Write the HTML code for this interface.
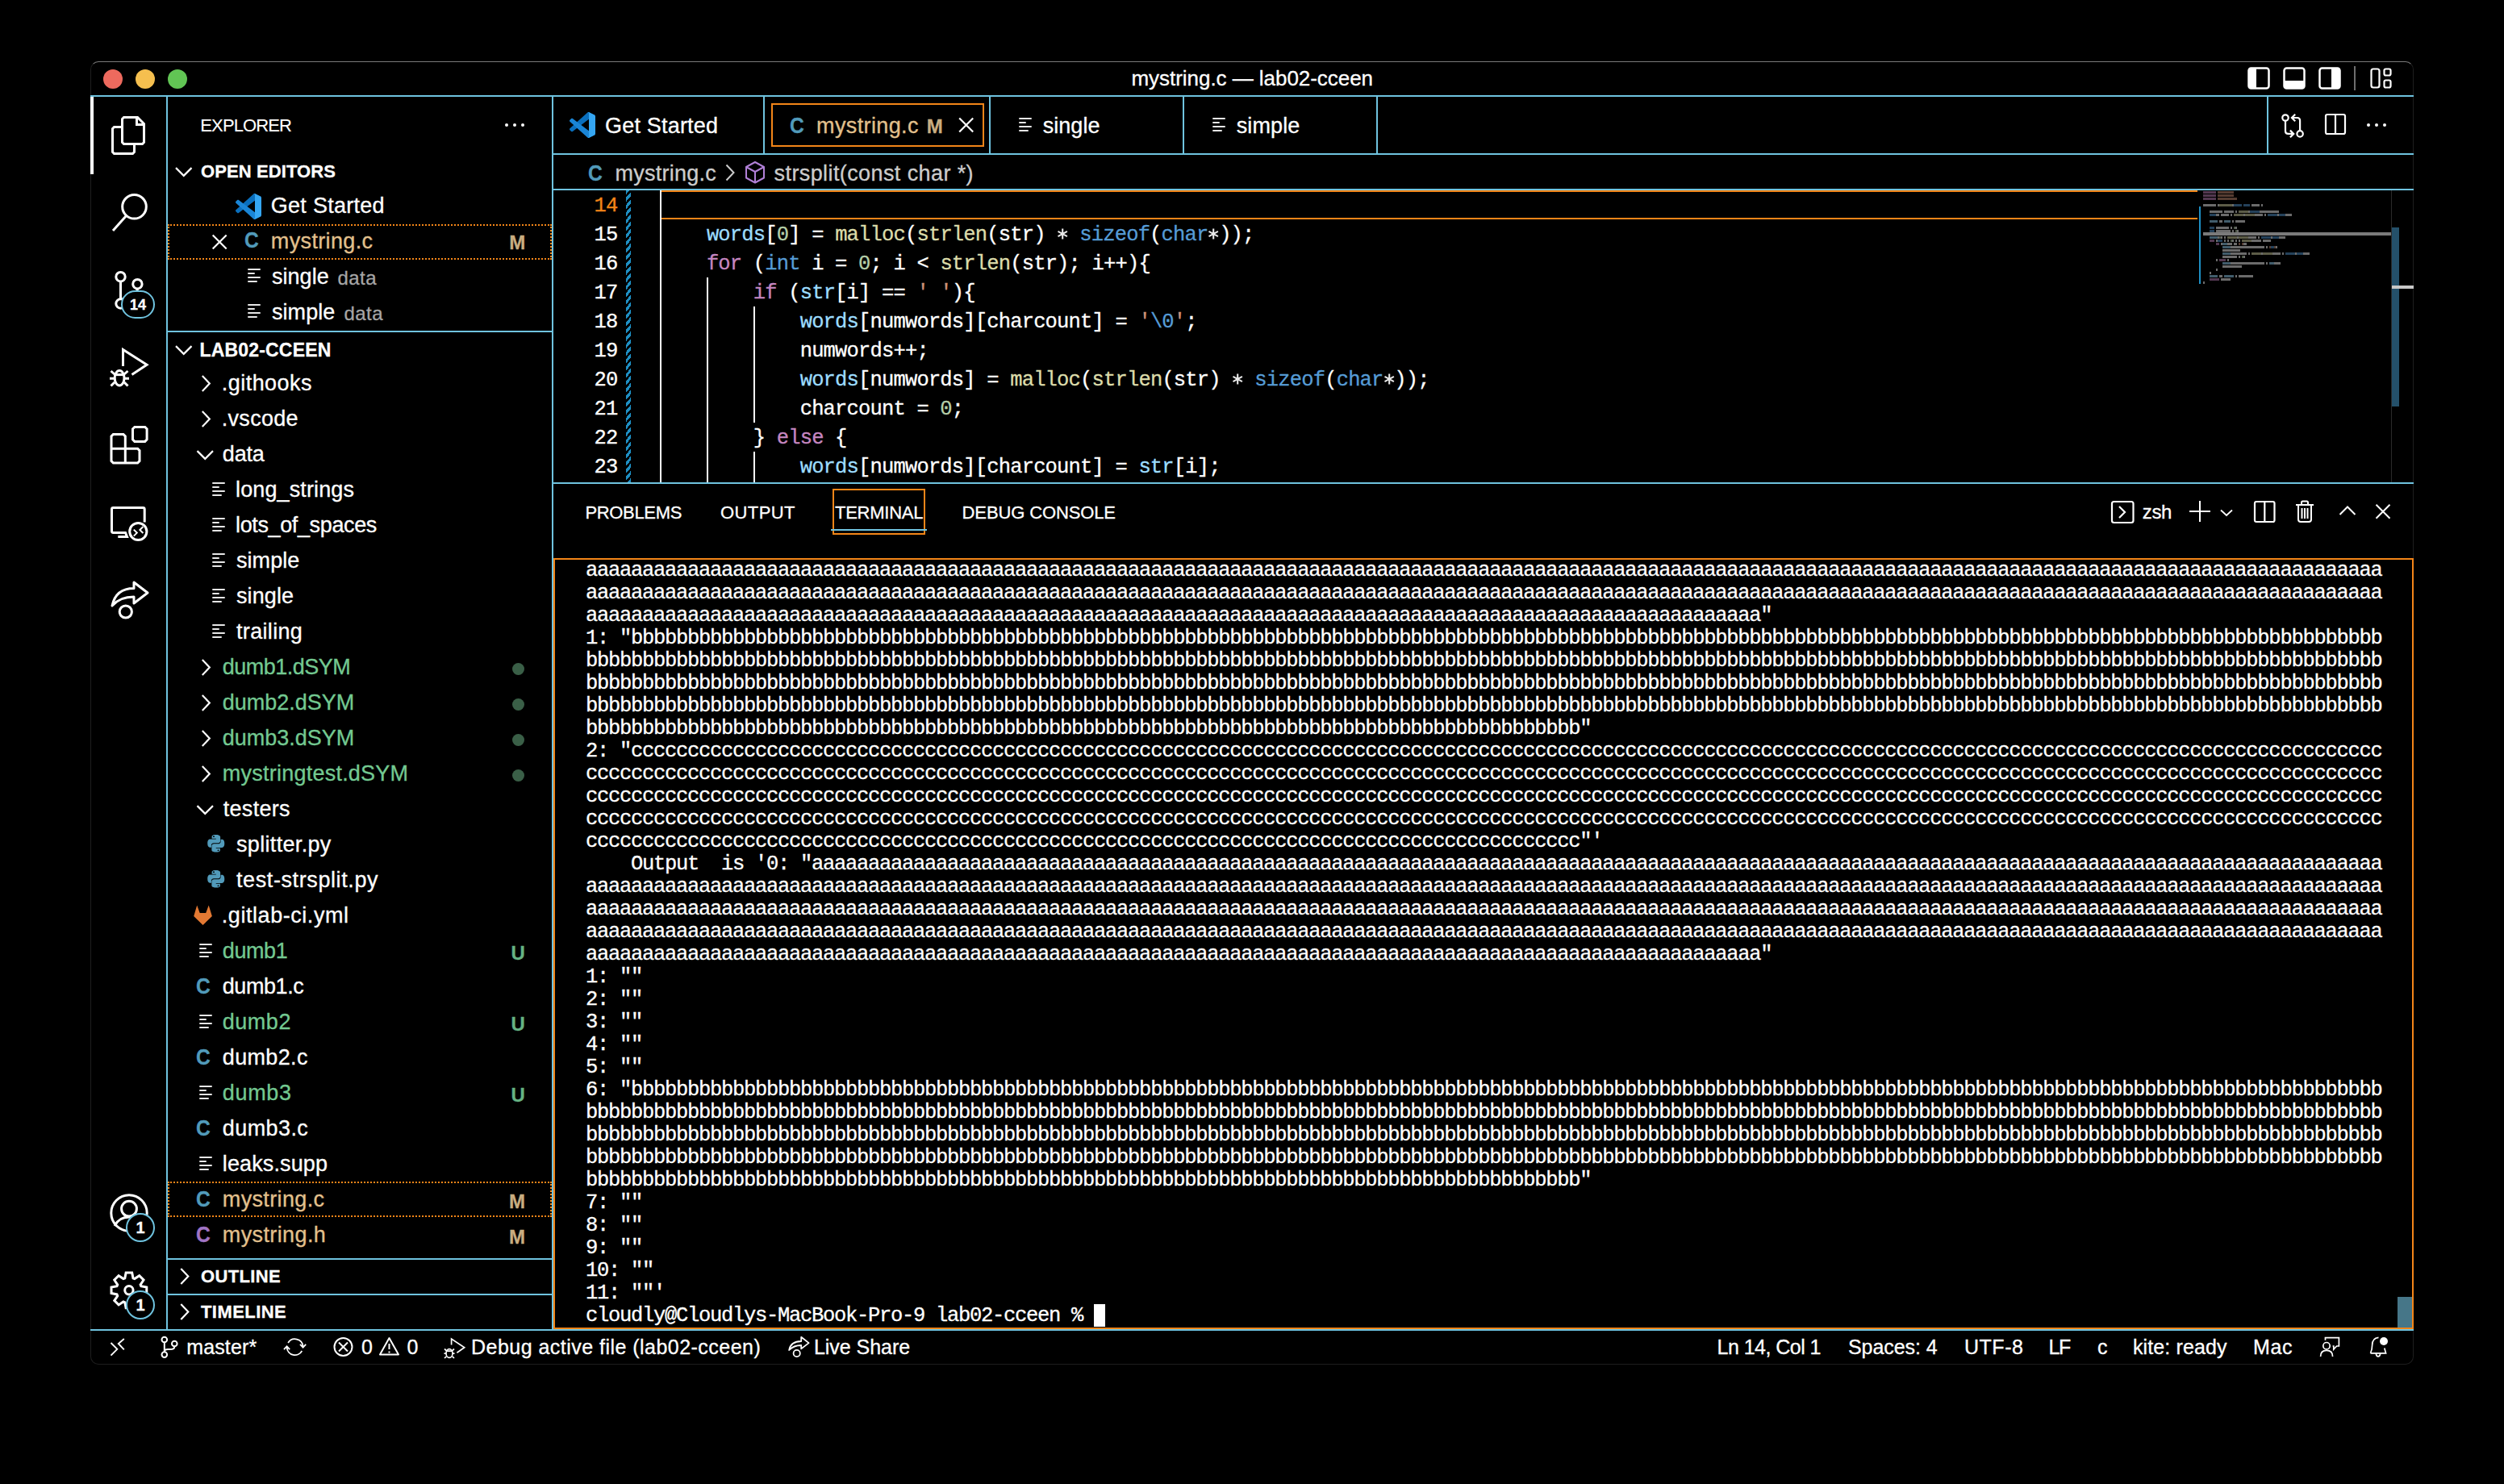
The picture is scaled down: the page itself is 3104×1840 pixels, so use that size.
<!DOCTYPE html>
<html><head><meta charset="utf-8">
<style>
html,body{margin:0;padding:0;background:#000;width:3104px;height:1840px;overflow:hidden}
body{position:relative;font-family:'Liberation Sans',sans-serif;color:#fff}
.a{position:absolute}
.t{position:absolute;white-space:pre;line-height:1;-webkit-text-stroke:0.3px currentColor}
svg{position:absolute;overflow:visible}
</style></head><body>

<div class="a" style="left:112px;top:76px;width:2878px;height:1614px;border:1px solid #1e1e1e;border-top-color:#7a7a7a;border-radius:10px"></div>
<div class="a" style="left:128px;top:86px;width:24px;height:24px;border-radius:50%;background:#ed6a5e"></div>
<div class="a" style="left:168px;top:86px;width:24px;height:24px;border-radius:50%;background:#f5bf4f"></div>
<div class="a" style="left:208px;top:86px;width:24px;height:24px;border-radius:50%;background:#61c554"></div>
<div class="t" style="left:1402.50px;top:83.79px;font-size:26px;color:#fff;letter-spacing:-0.044px;">mystring.c — lab02-cceen</div>
<svg width="3104" height="1840" style="left:0;top:0" fill="none" stroke="#fff" stroke-width="2.5" ><rect x="2787.5" y="84.5" width="25" height="25" rx="3"/></svg>
<div class="a" style="left:2787px;top:84px;width:10px;height:26px;background:#fff;border-radius:3px 0 0 3px"></div>
<svg width="3104" height="1840" style="left:0;top:0" fill="none" stroke="#fff" stroke-width="2.5" ><rect x="2831.5" y="84.5" width="25" height="25" rx="3"/></svg>
<div class="a" style="left:2831px;top:100px;width:26px;height:10px;background:#fff;border-radius:0 0 3px 3px"></div>
<svg width="3104" height="1840" style="left:0;top:0" fill="none" stroke="#fff" stroke-width="2.5" ><rect x="2875.5" y="84.5" width="25" height="25" rx="3"/></svg>
<div class="a" style="left:2890px;top:84px;width:11px;height:26px;background:#fff;border-radius:0 3px 3px 0"></div>
<div class="a" style="left:2918px;top:82px;width:2px;height:30px;background:#6e6e6e;"></div>
<svg width="3104" height="1840" style="left:0;top:0" fill="none" stroke="#fff" stroke-width="2.2" ><rect x="2939.5" y="85.5" width="10" height="23" rx="2.5"/><rect x="2955.5" y="85.5" width="8" height="8" rx="2"/><rect x="2955.5" y="99.5" width="8" height="9" rx="2"/></svg>
<div class="a" style="left:112px;top:118px;width:2880px;height:2px;background:#6fc3df;"></div>
<div class="a" style="left:206px;top:120px;width:2px;height:1528px;background:#6fc3df;"></div>
<div class="a" style="left:684px;top:120px;width:2px;height:1528px;background:#6fc3df;"></div>
<div class="a" style="left:112px;top:1648px;width:2880px;height:2px;background:#6fc3df;"></div>
<div class="a" style="left:112px;top:120px;width:4px;height:96px;background:#fff;"></div>
<svg width="3104" height="1840" style="left:0;top:0" fill="none" stroke="#fff" stroke-width="3" ><path d="M153.5,145.5 H170.5 L178.5,153.5 V176.5 L176.5,178.5 H153.5 L151.5,176.5 V147.5 Z"/><path d="M169.5,145.5 V154.5 H178.5"/><path d="M151.5,157.5 H141.5 L139.5,159.5 V188.5 L141.5,190.5 H164.5 L166.5,188.5 V178.5"/></svg>
<svg width="3104" height="1840" style="left:0;top:0" fill="none" stroke="#fff" stroke-width="3" ><circle cx="166.5" cy="256.3" r="14.8"/><path d="M156.5,267.5 L140,286"/></svg>
<svg width="3104" height="1840" style="left:0;top:0" fill="none" stroke="#fff" stroke-width="3" ><circle cx="149.5" cy="343.2" r="5.7"/><circle cx="170.4" cy="352.2" r="5.7"/><circle cx="149.5" cy="376.5" r="5.7"/><path d="M149.5,349 V370.5"/><path d="M170.4,358 C170.4,366 158,366 152,371"/></svg>
<div class="a" style="left:150px;top:360px;width:38px;height:31px;border:2px solid #6fc3df;border-radius:18px;background:#000"></div>
<div class="t" style="left:171.00px;transform:translateX(-50%);top:369.26px;font-size:18px;color:#fff;font-weight:bold;">14</div>
<svg width="3104" height="1840" style="left:0;top:0" fill="none" stroke="#fff" stroke-width="3" ><path d="M152.5,454 V433.5 L182,452.3 L163.5,464.5"/><ellipse cx="148.1" cy="468.8" rx="5.9" ry="9.2"/><path d="M141,464.6 H155"/><path d="M136,469.2 H141 M155,469.2 H160 M137.5,460 L142,464 M158.5,460 L154,464 M137.5,478.5 L142,474 M158.5,478.5 L154,474"/></svg>
<svg width="3104" height="1840" style="left:0;top:0" fill="none" stroke="#fff" stroke-width="3" stroke-linejoin="miter"><path d="M140.4,538.5 H152.9 L155.3,540.9 V556.3 H170.6 L173,558.7 V571.6 L170.6,574 H140.4 L138,571.6 V540.9 Z M138,556.3 H155.3 V574"/><path d="M166.9,529.4 H179.7 L182.1,531.8 V545 L179.7,547.4 H166.9 L164.5,545 V531.8 Z"/></svg>
<svg width="3104" height="1840" style="left:0;top:0" fill="none" stroke="#fff" stroke-width="3" ><path d="M179.2,647.5 V631.5 Q179.2,629.6 177.3,629.6 H140.4 Q138.5,629.6 138.5,631.5 V658.6 Q138.5,660.5 140.4,660.5 H155.5 L157.5,665.5 H146.3"/><circle cx="171.3" cy="659" r="10.6"/><path d="M165.8,656.6 L169.8,660.6 L165.8,664.6 M177.4,653 L173.4,657 L177.4,661" stroke-width="2"/></svg>
<svg width="3104" height="1840" style="left:0;top:0" fill="none" stroke="#fff" stroke-width="3" ><path d="M139,751 C142,737 150,729.5 166,729.5 V722 L183,735 L166,748 V740 C155,740 146,743 139,751 Z" stroke-linejoin="round"/><circle cx="155.8" cy="758.5" r="7.6"/></svg>
<svg width="3104" height="1840" style="left:0;top:0" fill="none" stroke="#fff" stroke-width="3" ><circle cx="160" cy="1504" r="22.2"/><circle cx="160" cy="1498.7" r="9.4"/><path d="M142,1520 C146,1512 152,1509 160,1509 C168,1509 174,1512 178,1520"/></svg>
<div class="a" style="left:156px;top:1504px;width:32px;height:32px;border:2px solid #6fc3df;border-radius:50%;background:#000"></div>
<div class="t" style="left:174.00px;transform:translateX(-50%);top:1511.57px;font-size:20px;color:#fff;font-weight:bold;">1</div>
<svg width="3104" height="1840" style="left:0;top:0" fill="none" stroke="#fff" stroke-width="3" ><polygon points="156.14,1577.92 163.66,1577.92 165.02,1584.85 166.85,1585.61 172.72,1581.67 178.03,1586.98 174.09,1592.85 174.85,1594.68 181.78,1596.04 181.78,1603.56 174.85,1604.92 174.09,1606.75 178.03,1612.62 172.72,1617.93 166.85,1613.99 165.02,1614.75 163.66,1621.68 156.14,1621.68 154.78,1614.75 152.95,1613.99 147.08,1617.93 141.77,1612.62 145.71,1606.75 144.95,1604.92 138.02,1603.56 138.02,1596.04 144.95,1594.68 145.71,1592.85 141.77,1586.98 147.08,1581.67 152.95,1585.61 154.78,1584.85" stroke-linejoin="miter"/><circle cx="159.9" cy="1599.8" r="5.2"/></svg>
<div class="a" style="left:156px;top:1600px;width:32px;height:32px;border:2px solid #6fc3df;border-radius:50%;background:#000"></div>
<div class="t" style="left:174.00px;transform:translateX(-50%);top:1607.57px;font-size:20px;color:#fff;font-weight:bold;">1</div>
<div class="t" style="left:248.30px;top:145.38px;font-size:22px;color:#fff;letter-spacing:-0.876px;-webkit-text-stroke:0.1px #fff">EXPLORER</div>
<div class="a" style="left:625.9px;top:152.9px;width:4.2px;height:4.2px;border-radius:50%;background:#fff"></div>
<div class="a" style="left:635.9px;top:152.9px;width:4.2px;height:4.2px;border-radius:50%;background:#fff"></div>
<div class="a" style="left:645.9px;top:152.9px;width:4.2px;height:4.2px;border-radius:50%;background:#fff"></div>
<svg width="3104" height="1840" style="left:0;top:0" fill="none" stroke="#fff" stroke-width="2.2" ><path d="M218.0,208.125 L227.75,217.875 L237.5,208.125"/></svg>
<div class="t" style="left:249.00px;top:202.38px;font-size:22px;color:#fff;font-weight:bold;letter-spacing:0.102px;">OPEN EDITORS</div>
<svg width="32" height="32" viewBox="0 0 100 100" style="left:292px;top:240px"><path fill="#0a6fbd" d="M96.46 10.8L75.86.87C73.48-.28 70.62.21 68.75 2.08L1.3 63.58c-1.81 1.65-1.81 4.51.01 6.16l5.51 5.01c1.49 1.35 3.72 1.45 5.32.24L93.4 13.47c2.72-2.06 6.62-.12 6.62 3.29v-.24c0-2.4-1.38-4.59-3.54-5.63z"/><path fill="#1a85d6" d="M96.46 89.2L75.86 99.13c-2.38 1.15-5.24.66-7.11-1.21L1.3 36.42c-1.81-1.65-1.81-4.51.01-6.16l5.51-5.01c1.49-1.35 3.72-1.45 5.32-.24L93.4 86.53c2.72 2.06 6.62.12 6.62-3.29v.24c0 2.4-1.38 4.59-3.54 5.63z"/><path fill="#35a6f2" d="M75.86 99.13c-2.38 1.15-5.24.66-7.11-1.21 2.31 2.31 6.25.67 6.25-2.59V4.67c0-3.26-3.94-4.9-6.25-2.59 1.87-1.87 4.73-2.36 7.11-1.21L96.46 10.8c2.17 1.04 3.54 3.23 3.54 5.63v67.14c0 2.4-1.38 4.59-3.54 5.63L75.86 99.13z"/></svg>
<div class="t" style="left:335.80px;top:242.04px;font-size:27px;color:#fff;letter-spacing:0.274px;">Get Started</div>
<div class="a" style="left:208px;top:278px;width:476px;height:44px;box-sizing:border-box;border:2px dotted #f38518"></div>
<svg width="3104" height="1840" style="left:0;top:0" fill="none" stroke="#fff" stroke-width="2.2" ><path d="M263.7,291.5 L280.7,308.5 M280.7,291.5 L263.7,308.5"/></svg>
<div class="t" style="left:302.90px;top:284.30px;font-size:28px;color:#519aba;font-weight:bold;transform:scaleX(0.88);transform-origin:0 0;">C</div>
<div class="t" style="left:335.80px;top:286.04px;font-size:27px;color:#e2c08d;letter-spacing:0.365px;">mystring.c</div>
<div class="t" style="left:631.30px;top:288.58px;font-size:24px;color:#c9ad80;font-weight:bold;">M</div>
<div class="a" style="left:307px;top:333px;width:16px;height:2px;background:#e6e6e6;border-radius:1px"></div>
<div class="a" style="left:307px;top:338px;width:9px;height:2px;background:#e6e6e6;border-radius:1px"></div>
<div class="a" style="left:307px;top:343px;width:16px;height:2px;background:#e6e6e6;border-radius:1px"></div>
<div class="a" style="left:307px;top:348px;width:12px;height:2px;background:#e6e6e6;border-radius:1px"></div>
<div class="t" style="left:337.00px;top:330.04px;font-size:27px;color:#fff;letter-spacing:0.034px;">single</div>
<div class="t" style="left:418.60px;top:332.58px;font-size:24px;color:#a6a6a6;letter-spacing:0.412px;">data</div>
<div class="a" style="left:307px;top:377px;width:16px;height:2px;background:#e6e6e6;border-radius:1px"></div>
<div class="a" style="left:307px;top:382px;width:9px;height:2px;background:#e6e6e6;border-radius:1px"></div>
<div class="a" style="left:307px;top:387px;width:16px;height:2px;background:#e6e6e6;border-radius:1px"></div>
<div class="a" style="left:307px;top:392px;width:12px;height:2px;background:#e6e6e6;border-radius:1px"></div>
<div class="t" style="left:337.00px;top:374.04px;font-size:27px;color:#fff;letter-spacing:0.059px;">simple</div>
<div class="t" style="left:426.60px;top:376.58px;font-size:24px;color:#a6a6a6;letter-spacing:0.412px;">data</div>
<div class="a" style="left:208px;top:410px;width:476px;height:2px;background:#6fc3df;"></div>
<svg width="3104" height="1840" style="left:0;top:0" fill="none" stroke="#fff" stroke-width="2.2" ><path d="M218.0,429.125 L227.75,438.875 L237.5,429.125"/></svg>
<div class="t" style="left:247.50px;top:422.53px;font-size:23px;color:#fff;font-weight:bold;letter-spacing:0.179px;">LAB02-CCEEN</div>
<svg width="3104" height="1840" style="left:0;top:0" fill="none" stroke="#fff" stroke-width="2.2" ><path d="M250.8,466.0 L259.8,475.5 L250.8,485.0"/></svg>
<div class="t" style="left:274.80px;top:462.14px;font-size:27px;color:#fff;letter-spacing:0.454px;">.githooks</div>
<svg width="3104" height="1840" style="left:0;top:0" fill="none" stroke="#fff" stroke-width="2.2" ><path d="M250.8,510.0 L259.8,519.5 L250.8,529.0"/></svg>
<div class="t" style="left:274.80px;top:506.14px;font-size:27px;color:#fff;letter-spacing:0.278px;">.vscode</div>
<svg width="3104" height="1840" style="left:0;top:0" fill="none" stroke="#fff" stroke-width="2.2" ><path d="M244.5,559.125 L254.25,568.875 L264.0,559.125"/></svg>
<div class="t" style="left:275.80px;top:550.14px;font-size:27px;color:#fff;letter-spacing:-0.178px;">data</div>
<div class="a" style="left:263px;top:598px;width:16px;height:2px;background:#e6e6e6;border-radius:1px"></div>
<div class="a" style="left:263px;top:603px;width:9px;height:2px;background:#e6e6e6;border-radius:1px"></div>
<div class="a" style="left:263px;top:608px;width:16px;height:2px;background:#e6e6e6;border-radius:1px"></div>
<div class="a" style="left:263px;top:613px;width:12px;height:2px;background:#e6e6e6;border-radius:1px"></div>
<div class="t" style="left:292.00px;top:594.14px;font-size:27px;color:#fff;letter-spacing:0.129px;">long_strings</div>
<div class="a" style="left:263px;top:642px;width:16px;height:2px;background:#e6e6e6;border-radius:1px"></div>
<div class="a" style="left:263px;top:647px;width:9px;height:2px;background:#e6e6e6;border-radius:1px"></div>
<div class="a" style="left:263px;top:652px;width:16px;height:2px;background:#e6e6e6;border-radius:1px"></div>
<div class="a" style="left:263px;top:657px;width:12px;height:2px;background:#e6e6e6;border-radius:1px"></div>
<div class="t" style="left:292.00px;top:638.14px;font-size:27px;color:#fff;letter-spacing:-0.37px;">lots_of_spaces</div>
<div class="a" style="left:263px;top:686px;width:16px;height:2px;background:#e6e6e6;border-radius:1px"></div>
<div class="a" style="left:263px;top:691px;width:9px;height:2px;background:#e6e6e6;border-radius:1px"></div>
<div class="a" style="left:263px;top:696px;width:16px;height:2px;background:#e6e6e6;border-radius:1px"></div>
<div class="a" style="left:263px;top:701px;width:12px;height:2px;background:#e6e6e6;border-radius:1px"></div>
<div class="t" style="left:293.00px;top:682.14px;font-size:27px;color:#fff;letter-spacing:0.059px;">simple</div>
<div class="a" style="left:263px;top:730px;width:16px;height:2px;background:#e6e6e6;border-radius:1px"></div>
<div class="a" style="left:263px;top:735px;width:9px;height:2px;background:#e6e6e6;border-radius:1px"></div>
<div class="a" style="left:263px;top:740px;width:16px;height:2px;background:#e6e6e6;border-radius:1px"></div>
<div class="a" style="left:263px;top:745px;width:12px;height:2px;background:#e6e6e6;border-radius:1px"></div>
<div class="t" style="left:293.00px;top:726.14px;font-size:27px;color:#fff;letter-spacing:0.094px;">single</div>
<div class="a" style="left:263px;top:774px;width:16px;height:2px;background:#e6e6e6;border-radius:1px"></div>
<div class="a" style="left:263px;top:779px;width:9px;height:2px;background:#e6e6e6;border-radius:1px"></div>
<div class="a" style="left:263px;top:784px;width:16px;height:2px;background:#e6e6e6;border-radius:1px"></div>
<div class="a" style="left:263px;top:789px;width:12px;height:2px;background:#e6e6e6;border-radius:1px"></div>
<div class="t" style="left:293.00px;top:770.14px;font-size:27px;color:#fff;letter-spacing:0.326px;">trailing</div>
<svg width="3104" height="1840" style="left:0;top:0" fill="none" stroke="#fff" stroke-width="2.2" ><path d="M250.8,818.0 L259.8,827.5 L250.8,837.0"/></svg>
<div class="t" style="left:275.80px;top:814.14px;font-size:27px;color:#73c991;letter-spacing:-0.521px;">dumb1.dSYM</div>
<div class="a" style="left:634.5px;top:821.5px;width:15px;height:15px;border-radius:50%;background:#3a5f47"></div>
<svg width="3104" height="1840" style="left:0;top:0" fill="none" stroke="#fff" stroke-width="2.2" ><path d="M250.8,862.0 L259.8,871.5 L250.8,881.0"/></svg>
<div class="t" style="left:275.80px;top:858.14px;font-size:27px;color:#73c991;letter-spacing:-0.021px;">dumb2.dSYM</div>
<div class="a" style="left:634.5px;top:865.5px;width:15px;height:15px;border-radius:50%;background:#3a5f47"></div>
<svg width="3104" height="1840" style="left:0;top:0" fill="none" stroke="#fff" stroke-width="2.2" ><path d="M250.8,906.0 L259.8,915.5 L250.8,925.0"/></svg>
<div class="t" style="left:275.80px;top:902.14px;font-size:27px;color:#73c991;letter-spacing:-0.021px;">dumb3.dSYM</div>
<div class="a" style="left:634.5px;top:909.5px;width:15px;height:15px;border-radius:50%;background:#3a5f47"></div>
<svg width="3104" height="1840" style="left:0;top:0" fill="none" stroke="#fff" stroke-width="2.2" ><path d="M250.8,950.0 L259.8,959.5 L250.8,969.0"/></svg>
<div class="t" style="left:275.80px;top:946.14px;font-size:27px;color:#73c991;letter-spacing:0.233px;">mystringtest.dSYM</div>
<div class="a" style="left:634.5px;top:953.5px;width:15px;height:15px;border-radius:50%;background:#3a5f47"></div>
<svg width="3104" height="1840" style="left:0;top:0" fill="none" stroke="#fff" stroke-width="2.2" ><path d="M244.5,999.125 L254.25,1008.875 L264.0,999.125"/></svg>
<div class="t" style="left:276.80px;top:990.14px;font-size:27px;color:#fff;letter-spacing:0.279px;">testers</div>
<svg width="21.5" height="21.5" viewBox="0 0 100 100" style="left:256.8px;top:1035px"><g fill="#519aba"><path d="M49,0C24,0 26,11 26,11V22H50V26H17C17,26 1,24 1,49C1,74 15,73 15,73H23V62C23,62 22,48 37,48H61C61,48 75,48 75,35V13C75,13 77,0 49,0Z"/><path d="M51,100C76,100 74,89 74,89V78H50V74H83C83,74 99,76 99,51C99,26 85,27 85,27H77V38C77,38 78,52 63,52H39C39,52 25,52 25,65V87C25,87 23,100 51,100Z"/></g><circle cx="37" cy="10" r="4.5" fill="#000"/><circle cx="63" cy="90" r="4.5" fill="#000"/></svg>
<div class="t" style="left:293.00px;top:1034.14px;font-size:27px;color:#fff;letter-spacing:0.325px;">splitter.py</div>
<svg width="21.5" height="21.5" viewBox="0 0 100 100" style="left:256.8px;top:1079px"><g fill="#519aba"><path d="M49,0C24,0 26,11 26,11V22H50V26H17C17,26 1,24 1,49C1,74 15,73 15,73H23V62C23,62 22,48 37,48H61C61,48 75,48 75,35V13C75,13 77,0 49,0Z"/><path d="M51,100C76,100 74,89 74,89V78H50V74H83C83,74 99,76 99,51C99,26 85,27 85,27H77V38C77,38 78,52 63,52H39C39,52 25,52 25,65V87C25,87 23,100 51,100Z"/></g><circle cx="37" cy="10" r="4.5" fill="#000"/><circle cx="63" cy="90" r="4.5" fill="#000"/></svg>
<div class="t" style="left:293.00px;top:1078.14px;font-size:27px;color:#fff;letter-spacing:0.598px;">test-strsplit.py</div>
<svg width="3104" height="1840" style="left:0;top:0"><path fill="#e37933" d="M244.2,1122.5 L247.7,1132.0 H255.2 L258.7,1122.5 L262.9,1136.0 L251.5,1147.0 L240.2,1136.0 Z"/></svg>
<div class="t" style="left:274.80px;top:1122.14px;font-size:27px;color:#fff;letter-spacing:0.551px;">.gitlab-ci.yml</div>
<div class="a" style="left:247px;top:1170px;width:16px;height:2px;background:#e6e6e6;border-radius:1px"></div>
<div class="a" style="left:247px;top:1175px;width:9px;height:2px;background:#e6e6e6;border-radius:1px"></div>
<div class="a" style="left:247px;top:1180px;width:16px;height:2px;background:#e6e6e6;border-radius:1px"></div>
<div class="a" style="left:247px;top:1185px;width:12px;height:2px;background:#e6e6e6;border-radius:1px"></div>
<div class="t" style="left:275.80px;top:1166.14px;font-size:27px;color:#73c991;letter-spacing:-0.41px;">dumb1</div>
<div class="t" style="left:633.60px;top:1169.68px;font-size:24px;color:#66b283;font-weight:bold;">U</div>
<div class="t" style="left:242.80px;top:1208.70px;font-size:28px;color:#519aba;font-weight:bold;transform:scaleX(0.88);transform-origin:0 0;">C</div>
<div class="t" style="left:275.80px;top:1210.14px;font-size:27px;color:#fff;letter-spacing:-0.443px;">dumb1.c</div>
<div class="a" style="left:247px;top:1258px;width:16px;height:2px;background:#e6e6e6;border-radius:1px"></div>
<div class="a" style="left:247px;top:1263px;width:9px;height:2px;background:#e6e6e6;border-radius:1px"></div>
<div class="a" style="left:247px;top:1268px;width:16px;height:2px;background:#e6e6e6;border-radius:1px"></div>
<div class="a" style="left:247px;top:1273px;width:12px;height:2px;background:#e6e6e6;border-radius:1px"></div>
<div class="t" style="left:275.80px;top:1254.14px;font-size:27px;color:#73c991;letter-spacing:0.515px;">dumb2</div>
<div class="t" style="left:633.60px;top:1257.68px;font-size:24px;color:#66b283;font-weight:bold;">U</div>
<div class="t" style="left:242.80px;top:1296.70px;font-size:28px;color:#519aba;font-weight:bold;transform:scaleX(0.88);transform-origin:0 0;">C</div>
<div class="t" style="left:275.80px;top:1298.14px;font-size:27px;color:#fff;letter-spacing:0.34px;">dumb2.c</div>
<div class="a" style="left:247px;top:1346px;width:16px;height:2px;background:#e6e6e6;border-radius:1px"></div>
<div class="a" style="left:247px;top:1351px;width:9px;height:2px;background:#e6e6e6;border-radius:1px"></div>
<div class="a" style="left:247px;top:1356px;width:16px;height:2px;background:#e6e6e6;border-radius:1px"></div>
<div class="a" style="left:247px;top:1361px;width:12px;height:2px;background:#e6e6e6;border-radius:1px"></div>
<div class="t" style="left:275.80px;top:1342.14px;font-size:27px;color:#73c991;letter-spacing:0.665px;">dumb3</div>
<div class="t" style="left:633.60px;top:1345.68px;font-size:24px;color:#66b283;font-weight:bold;">U</div>
<div class="t" style="left:242.80px;top:1384.70px;font-size:28px;color:#519aba;font-weight:bold;transform:scaleX(0.88);transform-origin:0 0;">C</div>
<div class="t" style="left:275.80px;top:1386.14px;font-size:27px;color:#fff;letter-spacing:0.407px;">dumb3.c</div>
<div class="a" style="left:247px;top:1434px;width:16px;height:2px;background:#e6e6e6;border-radius:1px"></div>
<div class="a" style="left:247px;top:1439px;width:9px;height:2px;background:#e6e6e6;border-radius:1px"></div>
<div class="a" style="left:247px;top:1444px;width:16px;height:2px;background:#e6e6e6;border-radius:1px"></div>
<div class="a" style="left:247px;top:1449px;width:12px;height:2px;background:#e6e6e6;border-radius:1px"></div>
<div class="t" style="left:275.80px;top:1430.14px;font-size:27px;color:#fff;letter-spacing:0.115px;">leaks.supp</div>
<div class="t" style="left:242.80px;top:1472.70px;font-size:28px;color:#519aba;font-weight:bold;transform:scaleX(0.88);transform-origin:0 0;">C</div>
<div class="t" style="left:275.80px;top:1474.14px;font-size:27px;color:#e2c08d;letter-spacing:0.354px;">mystring.c</div>
<div class="t" style="left:631.00px;top:1477.68px;font-size:24px;color:#c9ad80;font-weight:bold;">M</div>
<div class="a" style="left:208px;top:1465px;width:476px;height:44px;box-sizing:border-box;border:2px dotted #f38518"></div>
<div class="t" style="left:242.80px;top:1516.70px;font-size:28px;color:#a074c4;font-weight:bold;transform:scaleX(0.88);transform-origin:0 0;">C</div>
<div class="t" style="left:275.80px;top:1518.14px;font-size:27px;color:#e2c08d;letter-spacing:0.387px;">mystring.h</div>
<div class="t" style="left:631.00px;top:1521.68px;font-size:24px;color:#c9ad80;font-weight:bold;">M</div>
<div class="a" style="left:208px;top:1560px;width:476px;height:2px;background:#6fc3df;"></div>
<svg width="3104" height="1840" style="left:0;top:0" fill="none" stroke="#fff" stroke-width="2.2" ><path d="M224.3,1573.0 L233.3,1582.5 L224.3,1592.0"/></svg>
<div class="t" style="left:249.00px;top:1572.38px;font-size:22px;color:#fff;font-weight:bold;letter-spacing:0.354px;">OUTLINE</div>
<div class="a" style="left:208px;top:1604px;width:476px;height:2px;background:#6fc3df;"></div>
<svg width="3104" height="1840" style="left:0;top:0" fill="none" stroke="#fff" stroke-width="2.2" ><path d="M224.3,1617.0 L233.3,1626.5 L224.3,1636.0"/></svg>
<div class="t" style="left:249.00px;top:1616.38px;font-size:22px;color:#fff;font-weight:bold;letter-spacing:0.43px;">TIMELINE</div>
<div class="a" style="left:946px;top:120px;width:2px;height:70px;background:#6fc3df;"></div>
<div class="a" style="left:1226px;top:120px;width:2px;height:70px;background:#6fc3df;"></div>
<div class="a" style="left:1466px;top:120px;width:2px;height:70px;background:#6fc3df;"></div>
<div class="a" style="left:1706px;top:120px;width:2px;height:70px;background:#6fc3df;"></div>
<div class="a" style="left:2810px;top:120px;width:2px;height:70px;background:#6fc3df;"></div>
<div class="a" style="left:686px;top:190px;width:2306px;height:2px;background:#6fc3df;"></div>
<svg width="32" height="32" viewBox="0 0 100 100" style="left:705.7px;top:139px"><path fill="#0a6fbd" d="M96.46 10.8L75.86.87C73.48-.28 70.62.21 68.75 2.08L1.3 63.58c-1.81 1.65-1.81 4.51.01 6.16l5.51 5.01c1.49 1.35 3.72 1.45 5.32.24L93.4 13.47c2.72-2.06 6.62-.12 6.62 3.29v-.24c0-2.4-1.38-4.59-3.54-5.63z"/><path fill="#1a85d6" d="M96.46 89.2L75.86 99.13c-2.38 1.15-5.24.66-7.11-1.21L1.3 36.42c-1.81-1.65-1.81-4.51.01-6.16l5.51-5.01c1.49-1.35 3.72-1.45 5.32-.24L93.4 86.53c2.72 2.06 6.62.12 6.62-3.29v.24c0 2.4-1.38 4.59-3.54 5.63z"/><path fill="#35a6f2" d="M75.86 99.13c-2.38 1.15-5.24.66-7.11-1.21 2.31 2.31 6.25.67 6.25-2.59V4.67c0-3.26-3.94-4.9-6.25-2.59 1.87-1.87 4.73-2.36 7.11-1.21L96.46 10.8c2.17 1.04 3.54 3.23 3.54 5.63v67.14c0 2.4-1.38 4.59-3.54 5.63L75.86 99.13z"/></svg>
<div class="t" style="left:750.00px;top:142.94px;font-size:27px;color:#fff;letter-spacing:0.194px;">Get Started</div>
<div class="a" style="left:956px;top:128px;width:264px;height:54px;box-sizing:border-box;border:2px solid #f38518"></div>
<div class="t" style="left:978.70px;top:141.60px;font-size:28px;color:#519aba;font-weight:bold;transform:scaleX(0.88);transform-origin:0 0;">C</div>
<div class="t" style="left:1012.00px;top:142.94px;font-size:27px;color:#e2c08d;letter-spacing:0.387px;">mystring.c</div>
<div class="t" style="left:1148.70px;top:145.18px;font-size:24px;color:#c9ad80;font-weight:bold;">M</div>
<svg width="3104" height="1840" style="left:0;top:0" fill="none" stroke="#fff" stroke-width="2.2" ><path d="M1189.2,146.5 L1206.2,163.5 M1206.2,146.5 L1189.2,163.5"/></svg>
<div class="a" style="left:1263px;top:146px;width:16px;height:2px;background:#e6e6e6;border-radius:1px"></div>
<div class="a" style="left:1263px;top:151px;width:9px;height:2px;background:#e6e6e6;border-radius:1px"></div>
<div class="a" style="left:1263px;top:156px;width:16px;height:2px;background:#e6e6e6;border-radius:1px"></div>
<div class="a" style="left:1263px;top:161px;width:12px;height:2px;background:#e6e6e6;border-radius:1px"></div>
<div class="t" style="left:1292.70px;top:142.94px;font-size:27px;color:#fff;letter-spacing:0.054px;">single</div>
<div class="a" style="left:1503px;top:146px;width:16px;height:2px;background:#e6e6e6;border-radius:1px"></div>
<div class="a" style="left:1503px;top:151px;width:9px;height:2px;background:#e6e6e6;border-radius:1px"></div>
<div class="a" style="left:1503px;top:156px;width:16px;height:2px;background:#e6e6e6;border-radius:1px"></div>
<div class="a" style="left:1503px;top:161px;width:12px;height:2px;background:#e6e6e6;border-radius:1px"></div>
<div class="t" style="left:1532.70px;top:142.94px;font-size:27px;color:#fff;letter-spacing:0.119px;">simple</div>
<svg width="3104" height="1840" style="left:0;top:0" fill="none" stroke="#fff" stroke-width="2.2" ><circle cx="2833" cy="146" r="3.7"/><circle cx="2851.1" cy="165.9" r="3.7"/><path d="M2833,149.8 V162.5 Q2833,165.9 2836.5,165.9 H2843.2 M2838.9,161.6 L2843.2,165.9 L2838.9,170.2 M2851.1,162.1 V149.5 Q2851.1,146 2847.6,146 H2840.9 M2845.2,141.7 L2840.9,146 L2845.2,150.3"/></svg>
<svg width="3104" height="1840" style="left:0;top:0" fill="none" stroke="#fff" stroke-width="2.2" ><rect x="2883" y="142" width="24" height="24" rx="2"/><path d="M2895,142 V166"/></svg>
<div class="a" style="left:2933.9px;top:152.9px;width:4.2px;height:4.2px;border-radius:50%;background:#fff"></div>
<div class="a" style="left:2943.9px;top:152.9px;width:4.2px;height:4.2px;border-radius:50%;background:#fff"></div>
<div class="a" style="left:2953.9px;top:152.9px;width:4.2px;height:4.2px;border-radius:50%;background:#fff"></div>
<div class="t" style="left:728.60px;top:200.80px;font-size:28px;color:#519aba;font-weight:bold;transform:scaleX(0.88);transform-origin:0 0;">C</div>
<div class="t" style="left:762.60px;top:202.14px;font-size:27px;color:#cccccc;letter-spacing:0.243px;">mystring.c</div>
<svg width="3104" height="1840" style="left:0;top:0" fill="none" stroke="#cccccc" stroke-width="2" ><path d="M900.5,204.5 L909.5,214 L900.5,223.5"/></svg>
<svg width="3104" height="1840" style="left:0;top:0" fill="none" stroke="#b180d7" stroke-width="2" stroke-linejoin="round"><path d="M936,201 L947,207 V220.5 L936,226.5 L925,220.5 V207 Z M925,207 L936,213 L947,207 M936,213 V226.5"/></svg>
<div class="t" style="left:959.60px;top:202.14px;font-size:27px;color:#cccccc;letter-spacing:0.402px;">strsplit(const char *)</div>
<div class="a" style="left:686px;top:234px;width:2306px;height:2px;background:#6fc3df;"></div>
<div class="a" style="left:776px;top:236px;width:6px;height:362px;background:repeating-linear-gradient(-50deg,#1e8fc4 0 3.3px,transparent 3.3px 5.85px)"></div>
<div class="t" style="right:2338.50px;top:243.46px;font-size:25.5px;color:#f38518;font-family:'Liberation Mono',monospace;letter-spacing:-0.83px;">14</div>
<div class="t" style="right:2338.50px;top:279.46px;font-size:25.5px;color:#ffffff;font-family:'Liberation Mono',monospace;letter-spacing:-0.83px;">15</div>
<div class="t" style="right:2338.50px;top:315.46px;font-size:25.5px;color:#ffffff;font-family:'Liberation Mono',monospace;letter-spacing:-0.83px;">16</div>
<div class="t" style="right:2338.50px;top:351.46px;font-size:25.5px;color:#ffffff;font-family:'Liberation Mono',monospace;letter-spacing:-0.83px;">17</div>
<div class="t" style="right:2338.50px;top:387.46px;font-size:25.5px;color:#ffffff;font-family:'Liberation Mono',monospace;letter-spacing:-0.83px;">18</div>
<div class="t" style="right:2338.50px;top:423.46px;font-size:25.5px;color:#ffffff;font-family:'Liberation Mono',monospace;letter-spacing:-0.83px;">19</div>
<div class="t" style="right:2338.50px;top:459.46px;font-size:25.5px;color:#ffffff;font-family:'Liberation Mono',monospace;letter-spacing:-0.83px;">20</div>
<div class="t" style="right:2338.50px;top:495.46px;font-size:25.5px;color:#ffffff;font-family:'Liberation Mono',monospace;letter-spacing:-0.83px;">21</div>
<div class="t" style="right:2338.50px;top:531.46px;font-size:25.5px;color:#ffffff;font-family:'Liberation Mono',monospace;letter-spacing:-0.83px;">22</div>
<div class="t" style="right:2338.50px;top:567.46px;font-size:25.5px;color:#ffffff;font-family:'Liberation Mono',monospace;letter-spacing:-0.83px;">23</div>
<div class="a" style="left:820px;top:236px;width:1904px;height:2px;background:#f38518;"></div>
<div class="a" style="left:820px;top:270px;width:1904px;height:2px;background:#f38518;"></div>
<div class="a" style="left:818px;top:236px;width:2px;height:362px;background:#ffffff;"></div>
<div class="a" style="left:875.5px;top:344px;width:2px;height:254px;background:#ffffff;"></div>
<div class="a" style="left:933.5px;top:380px;width:2px;height:144px;background:#ffffff;"></div>
<div class="a" style="left:933.5px;top:560px;width:2px;height:38px;background:#ffffff;"></div>
<div class="t" style="left:818.00px;top:279.46px;font-size:25.5px;color:#fff;font-family:'Liberation Mono',monospace;letter-spacing:-0.83px;"><span style="color:#ffffff">    </span><span style="color:#9cdcfe">words</span><span style="color:#ffffff">[</span><span style="color:#b5cea8">0</span><span style="color:#ffffff">] = </span><span style="color:#dcdcaa">malloc</span><span style="color:#ffffff">(</span><span style="color:#dcdcaa">strlen</span><span style="color:#ffffff">(str) <svg width="14.47" height="1" style="position:relative;vertical-align:baseline;overflow:visible;margin-right:-0.83px" fill="none" stroke="#e8e8e8" stroke-width="2.1"><path d="M7.2,-13.4 V-0.6 M1.5,-10.1 L12.9,-3.9 M1.5,-3.9 L12.9,-10.1"/></svg> </span><span style="color:#569cd6">sizeof</span><span style="color:#ffffff">(</span><span style="color:#569cd6">char</span><span style="color:#ffffff"><svg width="14.47" height="1" style="position:relative;vertical-align:baseline;overflow:visible;margin-right:-0.83px" fill="none" stroke="#e8e8e8" stroke-width="2.1"><path d="M7.2,-13.4 V-0.6 M1.5,-10.1 L12.9,-3.9 M1.5,-3.9 L12.9,-10.1"/></svg>));</span></div>
<div class="t" style="left:818.00px;top:315.46px;font-size:25.5px;color:#fff;font-family:'Liberation Mono',monospace;letter-spacing:-0.83px;"><span style="color:#ffffff">    </span><span style="color:#c586c0">for</span><span style="color:#ffffff"> (</span><span style="color:#569cd6">int</span><span style="color:#ffffff"> i = </span><span style="color:#b5cea8">0</span><span style="color:#ffffff">; i &lt; </span><span style="color:#dcdcaa">strlen</span><span style="color:#ffffff">(str); i++){</span></div>
<div class="t" style="left:818.00px;top:351.46px;font-size:25.5px;color:#fff;font-family:'Liberation Mono',monospace;letter-spacing:-0.83px;"><span style="color:#ffffff">        </span><span style="color:#c586c0">if</span><span style="color:#ffffff"> (</span><span style="color:#9cdcfe">str</span><span style="color:#ffffff">[i] == </span><span style="color:#ce9178">&#x27; &#x27;</span><span style="color:#ffffff">){</span></div>
<div class="t" style="left:818.00px;top:387.46px;font-size:25.5px;color:#fff;font-family:'Liberation Mono',monospace;letter-spacing:-0.83px;"><span style="color:#ffffff">            </span><span style="color:#9cdcfe">words</span><span style="color:#ffffff">[numwords][charcount] = </span><span style="color:#ce9178">&#x27;</span><span style="color:#569cd6">\0</span><span style="color:#ce9178">&#x27;</span><span style="color:#ffffff">;</span></div>
<div class="t" style="left:818.00px;top:423.46px;font-size:25.5px;color:#fff;font-family:'Liberation Mono',monospace;letter-spacing:-0.83px;"><span style="color:#ffffff">            numwords++;</span></div>
<div class="t" style="left:818.00px;top:459.46px;font-size:25.5px;color:#fff;font-family:'Liberation Mono',monospace;letter-spacing:-0.83px;"><span style="color:#ffffff">            </span><span style="color:#9cdcfe">words</span><span style="color:#ffffff">[numwords] = </span><span style="color:#dcdcaa">malloc</span><span style="color:#ffffff">(</span><span style="color:#dcdcaa">strlen</span><span style="color:#ffffff">(str) <svg width="14.47" height="1" style="position:relative;vertical-align:baseline;overflow:visible;margin-right:-0.83px" fill="none" stroke="#e8e8e8" stroke-width="2.1"><path d="M7.2,-13.4 V-0.6 M1.5,-10.1 L12.9,-3.9 M1.5,-3.9 L12.9,-10.1"/></svg> </span><span style="color:#569cd6">sizeof</span><span style="color:#ffffff">(</span><span style="color:#569cd6">char</span><span style="color:#ffffff"><svg width="14.47" height="1" style="position:relative;vertical-align:baseline;overflow:visible;margin-right:-0.83px" fill="none" stroke="#e8e8e8" stroke-width="2.1"><path d="M7.2,-13.4 V-0.6 M1.5,-10.1 L12.9,-3.9 M1.5,-3.9 L12.9,-10.1"/></svg>));</span></div>
<div class="t" style="left:818.00px;top:495.46px;font-size:25.5px;color:#fff;font-family:'Liberation Mono',monospace;letter-spacing:-0.83px;"><span style="color:#ffffff">            charcount = </span><span style="color:#b5cea8">0</span><span style="color:#ffffff">;</span></div>
<div class="t" style="left:818.00px;top:531.46px;font-size:25.5px;color:#fff;font-family:'Liberation Mono',monospace;letter-spacing:-0.83px;"><span style="color:#ffffff">        } </span><span style="color:#c586c0">else</span><span style="color:#ffffff"> {</span></div>
<div class="t" style="left:818.00px;top:567.46px;font-size:25.5px;color:#fff;font-family:'Liberation Mono',monospace;letter-spacing:-0.83px;"><span style="color:#ffffff">            </span><span style="color:#9cdcfe">words</span><span style="color:#ffffff">[numwords][charcount] = </span><span style="color:#9cdcfe">str</span><span style="color:#ffffff">[i];</span></div>
<div class="a" style="left:2731px;top:288px;width:233px;height:4px;background:#7a7a7a;"></div>
<div class="a" style="left:2731px;top:236.5px;width:16px;height:3px;background:#c586c0;opacity:0.42"></div><div class="a" style="left:2749px;top:236.5px;width:20px;height:3px;background:#ce9178;opacity:0.42"></div><div class="a" style="left:2731px;top:240.5px;width:16px;height:3px;background:#c586c0;opacity:0.42"></div><div class="a" style="left:2749px;top:240.5px;width:20px;height:3px;background:#ce9178;opacity:0.42"></div><div class="a" style="left:2731px;top:244.5px;width:16px;height:3px;background:#c586c0;opacity:0.42"></div><div class="a" style="left:2749px;top:244.5px;width:24px;height:3px;background:#ce9178;opacity:0.42"></div><div class="a" style="left:2731px;top:252.5px;width:16px;height:3px;background:#ffffff;opacity:0.42"></div><div class="a" style="left:2749px;top:252.5px;width:2px;height:3px;background:#ffffff;opacity:0.42"></div><div class="a" style="left:2751px;top:252.5px;width:16px;height:3px;background:#dcdcaa;opacity:0.42"></div><div class="a" style="left:2767px;top:252.5px;width:2px;height:3px;background:#ffffff;opacity:0.42"></div><div class="a" style="left:2769px;top:252.5px;width:10px;height:3px;background:#569cd6;opacity:0.42"></div><div class="a" style="left:2781px;top:252.5px;width:8px;height:3px;background:#569cd6;opacity:0.42"></div><div class="a" style="left:2791px;top:252.5px;width:10px;height:3px;background:#ffffff;opacity:0.42"></div><div class="a" style="left:2803px;top:252.5px;width:2px;height:3px;background:#ffffff;opacity:0.42"></div><div class="a" style="left:2739px;top:260.5px;width:16px;height:3px;background:#ffffff;opacity:0.42"></div><div class="a" style="left:2757px;top:260.5px;width:12px;height:3px;background:#ffffff;opacity:0.42"></div><div class="a" style="left:2771px;top:260.5px;width:2px;height:3px;background:#ffffff;opacity:0.42"></div><div class="a" style="left:2775px;top:260.5px;width:12px;height:3px;background:#dcdcaa;opacity:0.42"></div><div class="a" style="left:2787px;top:260.5px;width:2px;height:3px;background:#ffffff;opacity:0.42"></div><div class="a" style="left:2789px;top:260.5px;width:12px;height:3px;background:#569cd6;opacity:0.42"></div><div class="a" style="left:2801px;top:260.5px;width:24px;height:3px;background:#ffffff;opacity:0.42"></div><div class="a" style="left:2739px;top:264.5px;width:8px;height:3px;background:#569cd6;opacity:0.42"></div><div class="a" style="left:2747px;top:264.5px;width:4px;height:3px;background:#ffffff;opacity:0.42"></div><div class="a" style="left:2753px;top:264.5px;width:10px;height:3px;background:#ffffff;opacity:0.42"></div><div class="a" style="left:2765px;top:264.5px;width:2px;height:3px;background:#ffffff;opacity:0.42"></div><div class="a" style="left:2769px;top:264.5px;width:12px;height:3px;background:#dcdcaa;opacity:0.42"></div><div class="a" style="left:2781px;top:264.5px;width:2px;height:3px;background:#ffffff;opacity:0.42"></div><div class="a" style="left:2783px;top:264.5px;width:12px;height:3px;background:#dcdcaa;opacity:0.42"></div><div class="a" style="left:2795px;top:264.5px;width:10px;height:3px;background:#ffffff;opacity:0.42"></div><div class="a" style="left:2807px;top:264.5px;width:2px;height:3px;background:#ffffff;opacity:0.42"></div><div class="a" style="left:2811px;top:264.5px;width:12px;height:3px;background:#569cd6;opacity:0.42"></div><div class="a" style="left:2823px;top:264.5px;width:2px;height:3px;background:#ffffff;opacity:0.42"></div><div class="a" style="left:2825px;top:264.5px;width:8px;height:3px;background:#569cd6;opacity:0.42"></div><div class="a" style="left:2833px;top:264.5px;width:8px;height:3px;background:#ffffff;opacity:0.42"></div><div class="a" style="left:2739px;top:272.5px;width:10px;height:3px;background:#9cdcfe;opacity:0.42"></div><div class="a" style="left:2751px;top:272.5px;width:4px;height:3px;background:#ffffff;opacity:0.42"></div><div class="a" style="left:2757px;top:272.5px;width:8px;height:3px;background:#9cdcfe;opacity:0.42"></div><div class="a" style="left:2767px;top:272.5px;width:2px;height:3px;background:#ffffff;opacity:0.42"></div><div class="a" style="left:2771px;top:272.5px;width:12px;height:3px;background:#ffffff;opacity:0.42"></div><div class="a" style="left:2739px;top:280.5px;width:6px;height:3px;background:#569cd6;opacity:0.42"></div><div class="a" style="left:2747px;top:280.5px;width:16px;height:3px;background:#ffffff;opacity:0.42"></div><div class="a" style="left:2765px;top:280.5px;width:2px;height:3px;background:#ffffff;opacity:0.42"></div><div class="a" style="left:2769px;top:280.5px;width:2px;height:3px;background:#b5cea8;opacity:0.42"></div><div class="a" style="left:2771px;top:280.5px;width:2px;height:3px;background:#ffffff;opacity:0.42"></div><div class="a" style="left:2739px;top:284.5px;width:6px;height:3px;background:#569cd6;opacity:0.42"></div><div class="a" style="left:2747px;top:284.5px;width:18px;height:3px;background:#ffffff;opacity:0.42"></div><div class="a" style="left:2767px;top:284.5px;width:2px;height:3px;background:#ffffff;opacity:0.42"></div><div class="a" style="left:2771px;top:284.5px;width:2px;height:3px;background:#b5cea8;opacity:0.42"></div><div class="a" style="left:2773px;top:284.5px;width:2px;height:3px;background:#ffffff;opacity:0.42"></div><div class="a" style="left:2739px;top:292.5px;width:10px;height:3px;background:#9cdcfe;opacity:0.42"></div><div class="a" style="left:2749px;top:292.5px;width:2px;height:3px;background:#ffffff;opacity:0.42"></div><div class="a" style="left:2751px;top:292.5px;width:2px;height:3px;background:#b5cea8;opacity:0.42"></div><div class="a" style="left:2753px;top:292.5px;width:2px;height:3px;background:#ffffff;opacity:0.42"></div><div class="a" style="left:2757px;top:292.5px;width:2px;height:3px;background:#ffffff;opacity:0.42"></div><div class="a" style="left:2761px;top:292.5px;width:12px;height:3px;background:#dcdcaa;opacity:0.42"></div><div class="a" style="left:2773px;top:292.5px;width:2px;height:3px;background:#ffffff;opacity:0.42"></div><div class="a" style="left:2775px;top:292.5px;width:12px;height:3px;background:#dcdcaa;opacity:0.42"></div><div class="a" style="left:2787px;top:292.5px;width:10px;height:3px;background:#ffffff;opacity:0.42"></div><div class="a" style="left:2799px;top:292.5px;width:2px;height:3px;background:#ffffff;opacity:0.42"></div><div class="a" style="left:2803px;top:292.5px;width:12px;height:3px;background:#569cd6;opacity:0.42"></div><div class="a" style="left:2815px;top:292.5px;width:2px;height:3px;background:#ffffff;opacity:0.42"></div><div class="a" style="left:2817px;top:292.5px;width:8px;height:3px;background:#569cd6;opacity:0.42"></div><div class="a" style="left:2825px;top:292.5px;width:8px;height:3px;background:#ffffff;opacity:0.42"></div><div class="a" style="left:2739px;top:296.5px;width:6px;height:3px;background:#c586c0;opacity:0.42"></div><div class="a" style="left:2747px;top:296.5px;width:2px;height:3px;background:#ffffff;opacity:0.42"></div><div class="a" style="left:2749px;top:296.5px;width:6px;height:3px;background:#569cd6;opacity:0.42"></div><div class="a" style="left:2757px;top:296.5px;width:2px;height:3px;background:#ffffff;opacity:0.42"></div><div class="a" style="left:2761px;top:296.5px;width:2px;height:3px;background:#ffffff;opacity:0.42"></div><div class="a" style="left:2765px;top:296.5px;width:2px;height:3px;background:#b5cea8;opacity:0.42"></div><div class="a" style="left:2767px;top:296.5px;width:2px;height:3px;background:#ffffff;opacity:0.42"></div><div class="a" style="left:2771px;top:296.5px;width:2px;height:3px;background:#ffffff;opacity:0.42"></div><div class="a" style="left:2775px;top:296.5px;width:2px;height:3px;background:#ffffff;opacity:0.42"></div><div class="a" style="left:2779px;top:296.5px;width:12px;height:3px;background:#dcdcaa;opacity:0.42"></div><div class="a" style="left:2791px;top:296.5px;width:12px;height:3px;background:#ffffff;opacity:0.42"></div><div class="a" style="left:2805px;top:296.5px;width:10px;height:3px;background:#ffffff;opacity:0.42"></div><div class="a" style="left:2747px;top:300.5px;width:4px;height:3px;background:#c586c0;opacity:0.42"></div><div class="a" style="left:2753px;top:300.5px;width:2px;height:3px;background:#ffffff;opacity:0.42"></div><div class="a" style="left:2755px;top:300.5px;width:6px;height:3px;background:#9cdcfe;opacity:0.42"></div><div class="a" style="left:2761px;top:300.5px;width:6px;height:3px;background:#ffffff;opacity:0.42"></div><div class="a" style="left:2769px;top:300.5px;width:4px;height:3px;background:#ffffff;opacity:0.42"></div><div class="a" style="left:2775px;top:300.5px;width:2px;height:3px;background:#ce9178;opacity:0.42"></div><div class="a" style="left:2779px;top:300.5px;width:2px;height:3px;background:#ce9178;opacity:0.42"></div><div class="a" style="left:2781px;top:300.5px;width:4px;height:3px;background:#ffffff;opacity:0.42"></div><div class="a" style="left:2755px;top:304.5px;width:10px;height:3px;background:#9cdcfe;opacity:0.42"></div><div class="a" style="left:2765px;top:304.5px;width:42px;height:3px;background:#ffffff;opacity:0.42"></div><div class="a" style="left:2809px;top:304.5px;width:2px;height:3px;background:#ffffff;opacity:0.42"></div><div class="a" style="left:2813px;top:304.5px;width:2px;height:3px;background:#ce9178;opacity:0.42"></div><div class="a" style="left:2815px;top:304.5px;width:4px;height:3px;background:#569cd6;opacity:0.42"></div><div class="a" style="left:2819px;top:304.5px;width:2px;height:3px;background:#ce9178;opacity:0.42"></div><div class="a" style="left:2821px;top:304.5px;width:2px;height:3px;background:#ffffff;opacity:0.42"></div><div class="a" style="left:2755px;top:308.5px;width:22px;height:3px;background:#ffffff;opacity:0.42"></div><div class="a" style="left:2755px;top:312.5px;width:10px;height:3px;background:#9cdcfe;opacity:0.42"></div><div class="a" style="left:2765px;top:312.5px;width:20px;height:3px;background:#ffffff;opacity:0.42"></div><div class="a" style="left:2787px;top:312.5px;width:2px;height:3px;background:#ffffff;opacity:0.42"></div><div class="a" style="left:2791px;top:312.5px;width:12px;height:3px;background:#dcdcaa;opacity:0.42"></div><div class="a" style="left:2803px;top:312.5px;width:2px;height:3px;background:#ffffff;opacity:0.42"></div><div class="a" style="left:2805px;top:312.5px;width:12px;height:3px;background:#dcdcaa;opacity:0.42"></div><div class="a" style="left:2817px;top:312.5px;width:10px;height:3px;background:#ffffff;opacity:0.42"></div><div class="a" style="left:2829px;top:312.5px;width:2px;height:3px;background:#ffffff;opacity:0.42"></div><div class="a" style="left:2833px;top:312.5px;width:12px;height:3px;background:#569cd6;opacity:0.42"></div><div class="a" style="left:2845px;top:312.5px;width:2px;height:3px;background:#ffffff;opacity:0.42"></div><div class="a" style="left:2847px;top:312.5px;width:8px;height:3px;background:#569cd6;opacity:0.42"></div><div class="a" style="left:2855px;top:312.5px;width:8px;height:3px;background:#ffffff;opacity:0.42"></div><div class="a" style="left:2755px;top:316.5px;width:18px;height:3px;background:#ffffff;opacity:0.42"></div><div class="a" style="left:2775px;top:316.5px;width:2px;height:3px;background:#ffffff;opacity:0.42"></div><div class="a" style="left:2779px;top:316.5px;width:2px;height:3px;background:#b5cea8;opacity:0.42"></div><div class="a" style="left:2781px;top:316.5px;width:2px;height:3px;background:#ffffff;opacity:0.42"></div><div class="a" style="left:2747px;top:320.5px;width:2px;height:3px;background:#ffffff;opacity:0.42"></div><div class="a" style="left:2751px;top:320.5px;width:8px;height:3px;background:#c586c0;opacity:0.42"></div><div class="a" style="left:2761px;top:320.5px;width:2px;height:3px;background:#ffffff;opacity:0.42"></div><div class="a" style="left:2755px;top:324.5px;width:10px;height:3px;background:#9cdcfe;opacity:0.42"></div><div class="a" style="left:2765px;top:324.5px;width:42px;height:3px;background:#ffffff;opacity:0.42"></div><div class="a" style="left:2809px;top:324.5px;width:2px;height:3px;background:#ffffff;opacity:0.42"></div><div class="a" style="left:2813px;top:324.5px;width:6px;height:3px;background:#9cdcfe;opacity:0.42"></div><div class="a" style="left:2819px;top:324.5px;width:8px;height:3px;background:#ffffff;opacity:0.42"></div><div class="a" style="left:2755px;top:328.5px;width:24px;height:3px;background:#ffffff;opacity:0.42"></div><div class="a" style="left:2747px;top:332.5px;width:2px;height:3px;background:#ffffff;opacity:0.42"></div><div class="a" style="left:2739px;top:336.5px;width:2px;height:3px;background:#ffffff;opacity:0.42"></div><div class="a" style="left:2739px;top:340.5px;width:10px;height:3px;background:#9cdcfe;opacity:0.42"></div><div class="a" style="left:2751px;top:340.5px;width:4px;height:3px;background:#ffffff;opacity:0.42"></div><div class="a" style="left:2757px;top:340.5px;width:12px;height:3px;background:#9cdcfe;opacity:0.42"></div><div class="a" style="left:2771px;top:340.5px;width:2px;height:3px;background:#ffffff;opacity:0.42"></div><div class="a" style="left:2775px;top:340.5px;width:18px;height:3px;background:#ffffff;opacity:0.42"></div><div class="a" style="left:2739px;top:344.5px;width:12px;height:3px;background:#c586c0;opacity:0.42"></div><div class="a" style="left:2753px;top:344.5px;width:12px;height:3px;background:#ffffff;opacity:0.42"></div><div class="a" style="left:2731px;top:348.5px;width:2px;height:3px;background:#ffffff;opacity:0.42"></div>
<div class="a" style="left:2726px;top:256px;width:2px;height:96px;background:#1e8fc4;"></div>
<div class="a" style="left:2720px;top:236px;width:4px;height:2px;background:#f38518;"></div>
<div class="a" style="left:2720px;top:270px;width:4px;height:2px;background:#f38518;"></div>
<div class="a" style="left:2964px;top:236px;width:1px;height:362px;background:#2a2a2a;"></div>
<div class="a" style="left:2965px;top:282px;width:9px;height:222px;background:#24506a;"></div>
<div class="a" style="left:2965px;top:354px;width:27px;height:4px;background:#c8c8c8;"></div>
<div class="a" style="left:686px;top:598px;width:2306px;height:2px;background:#6fc3df;"></div>
<div class="t" style="left:725.40px;top:624.88px;font-size:22px;color:#fff;letter-spacing:-0.326px;">PROBLEMS</div>
<div class="t" style="left:893.00px;top:624.88px;font-size:22px;color:#fff;letter-spacing:0.4px;">OUTPUT</div>
<div class="t" style="left:1035.00px;top:624.88px;font-size:22px;color:#fff;letter-spacing:-0.257px;">TERMINAL</div>
<div class="t" style="left:1192.60px;top:624.88px;font-size:22px;color:#fff;letter-spacing:-0.13px;">DEBUG CONSOLE</div>
<div class="a" style="left:1032px;top:606px;width:115px;height:57px;box-sizing:border-box;border:2px solid #f38518"></div>
<div class="a" style="left:1030px;top:656px;width:119px;height:2px;background:#6fc3df;"></div>
<svg width="3104" height="1840" style="left:0;top:0" fill="none" stroke="#fff" stroke-width="2.2" ><rect x="2618" y="622" width="26.5" height="26" rx="2.5"/><path d="M2627,628 L2634,635 L2627,642"/></svg>
<div class="t" style="left:2655.80px;top:623.48px;font-size:24px;color:#fff;letter-spacing:-0.4px;">zsh</div>
<svg width="3104" height="1840" style="left:0;top:0" fill="none" stroke="#fff" stroke-width="2" ><path d="M2727,621 V647 M2714,634 H2740"/></svg>
<svg width="3104" height="1840" style="left:0;top:0" fill="none" stroke="#fff" stroke-width="1.8" ><path d="M2753,632.5 L2760,639 L2767,632.5"/></svg>
<svg width="3104" height="1840" style="left:0;top:0" fill="none" stroke="#fff" stroke-width="2.2" ><rect x="2795" y="622" width="24.5" height="25" rx="2"/><path d="M2807.3,622 V647"/></svg>
<svg width="3104" height="1840" style="left:0;top:0" fill="none" stroke="#fff" stroke-width="2" ><path d="M2846,626 H2868 M2853,626 V623 Q2853,621.5 2854.5,621.5 H2859.5 Q2861,621.5 2861,623 V626 M2849,626 V644 Q2849,647 2852,647 H2862 Q2865,647 2865,644 V626 M2853.5,630 V643 M2857,630 V643 M2860.5,630 V643"/></svg>
<svg width="3104" height="1840" style="left:0;top:0" fill="none" stroke="#fff" stroke-width="2" ><path d="M2900.5,638 L2910,628.5 L2919.5,638"/></svg>
<svg width="3104" height="1840" style="left:0;top:0" fill="none" stroke="#fff" stroke-width="2" ><path d="M2945.5,625.7 L2962.5,642.7 M2962.5,625.7 L2945.5,642.7"/></svg>
<div class="a" style="left:686px;top:692px;width:2306px;height:956px;box-sizing:border-box;border:2px solid #f38518"></div>
<div class="a" style="left:2972px;top:1608px;width:18px;height:38px;background:#467688;"></div>
<div class="t" style="left:726.00px;top:694.96px;font-size:25.5px;color:#fff;font-family:'Liberation Mono',monospace;letter-spacing:-1.3px;">aaaaaaaaaaaaaaaaaaaaaaaaaaaaaaaaaaaaaaaaaaaaaaaaaaaaaaaaaaaaaaaaaaaaaaaaaaaaaaaaaaaaaaaaaaaaaaaaaaaaaaaaaaaaaaaaaaaaaaaaaaaaaaaaaaaaaaaaaaaaaaaaaaaaaaaaaaaaaaa</div>
<div class="t" style="left:726.00px;top:722.96px;font-size:25.5px;color:#fff;font-family:'Liberation Mono',monospace;letter-spacing:-1.3px;">aaaaaaaaaaaaaaaaaaaaaaaaaaaaaaaaaaaaaaaaaaaaaaaaaaaaaaaaaaaaaaaaaaaaaaaaaaaaaaaaaaaaaaaaaaaaaaaaaaaaaaaaaaaaaaaaaaaaaaaaaaaaaaaaaaaaaaaaaaaaaaaaaaaaaaaaaaaaaaa</div>
<div class="t" style="left:726.00px;top:750.96px;font-size:25.5px;color:#fff;font-family:'Liberation Mono',monospace;letter-spacing:-1.3px;">aaaaaaaaaaaaaaaaaaaaaaaaaaaaaaaaaaaaaaaaaaaaaaaaaaaaaaaaaaaaaaaaaaaaaaaaaaaaaaaaaaaaaaaaaaaaaaaaaaaaaaaa&quot;</div>
<div class="t" style="left:726.00px;top:778.96px;font-size:25.5px;color:#fff;font-family:'Liberation Mono',monospace;letter-spacing:-1.3px;">1: &quot;bbbbbbbbbbbbbbbbbbbbbbbbbbbbbbbbbbbbbbbbbbbbbbbbbbbbbbbbbbbbbbbbbbbbbbbbbbbbbbbbbbbbbbbbbbbbbbbbbbbbbbbbbbbbbbbbbbbbbbbbbbbbbbbbbbbbbbbbbbbbbbbbbbbbbbbbbbb</div>
<div class="t" style="left:726.00px;top:806.96px;font-size:25.5px;color:#fff;font-family:'Liberation Mono',monospace;letter-spacing:-1.3px;">bbbbbbbbbbbbbbbbbbbbbbbbbbbbbbbbbbbbbbbbbbbbbbbbbbbbbbbbbbbbbbbbbbbbbbbbbbbbbbbbbbbbbbbbbbbbbbbbbbbbbbbbbbbbbbbbbbbbbbbbbbbbbbbbbbbbbbbbbbbbbbbbbbbbbbbbbbbbbbb</div>
<div class="t" style="left:726.00px;top:834.96px;font-size:25.5px;color:#fff;font-family:'Liberation Mono',monospace;letter-spacing:-1.3px;">bbbbbbbbbbbbbbbbbbbbbbbbbbbbbbbbbbbbbbbbbbbbbbbbbbbbbbbbbbbbbbbbbbbbbbbbbbbbbbbbbbbbbbbbbbbbbbbbbbbbbbbbbbbbbbbbbbbbbbbbbbbbbbbbbbbbbbbbbbbbbbbbbbbbbbbbbbbbbbb</div>
<div class="t" style="left:726.00px;top:862.96px;font-size:25.5px;color:#fff;font-family:'Liberation Mono',monospace;letter-spacing:-1.3px;">bbbbbbbbbbbbbbbbbbbbbbbbbbbbbbbbbbbbbbbbbbbbbbbbbbbbbbbbbbbbbbbbbbbbbbbbbbbbbbbbbbbbbbbbbbbbbbbbbbbbbbbbbbbbbbbbbbbbbbbbbbbbbbbbbbbbbbbbbbbbbbbbbbbbbbbbbbbbbbb</div>
<div class="t" style="left:726.00px;top:890.96px;font-size:25.5px;color:#fff;font-family:'Liberation Mono',monospace;letter-spacing:-1.3px;">bbbbbbbbbbbbbbbbbbbbbbbbbbbbbbbbbbbbbbbbbbbbbbbbbbbbbbbbbbbbbbbbbbbbbbbbbbbbbbbbbbbbbbbb&quot;</div>
<div class="t" style="left:726.00px;top:918.96px;font-size:25.5px;color:#fff;font-family:'Liberation Mono',monospace;letter-spacing:-1.3px;">2: &quot;ccccccccccccccccccccccccccccccccccccccccccccccccccccccccccccccccccccccccccccccccccccccccccccccccccccccccccccccccccccccccccccccccccccccccccccccccccccccccccc</div>
<div class="t" style="left:726.00px;top:946.96px;font-size:25.5px;color:#fff;font-family:'Liberation Mono',monospace;letter-spacing:-1.3px;">ccccccccccccccccccccccccccccccccccccccccccccccccccccccccccccccccccccccccccccccccccccccccccccccccccccccccccccccccccccccccccccccccccccccccccccccccccccccccccccccc</div>
<div class="t" style="left:726.00px;top:974.96px;font-size:25.5px;color:#fff;font-family:'Liberation Mono',monospace;letter-spacing:-1.3px;">ccccccccccccccccccccccccccccccccccccccccccccccccccccccccccccccccccccccccccccccccccccccccccccccccccccccccccccccccccccccccccccccccccccccccccccccccccccccccccccccc</div>
<div class="t" style="left:726.00px;top:1002.96px;font-size:25.5px;color:#fff;font-family:'Liberation Mono',monospace;letter-spacing:-1.3px;">ccccccccccccccccccccccccccccccccccccccccccccccccccccccccccccccccccccccccccccccccccccccccccccccccccccccccccccccccccccccccccccccccccccccccccccccccccccccccccccccc</div>
<div class="t" style="left:726.00px;top:1030.96px;font-size:25.5px;color:#fff;font-family:'Liberation Mono',monospace;letter-spacing:-1.3px;">cccccccccccccccccccccccccccccccccccccccccccccccccccccccccccccccccccccccccccccccccccccccc&quot;&#x27;</div>
<div class="t" style="left:726.00px;top:1058.96px;font-size:25.5px;color:#fff;font-family:'Liberation Mono',monospace;letter-spacing:-1.3px;">    Output  is &#x27;0: &quot;aaaaaaaaaaaaaaaaaaaaaaaaaaaaaaaaaaaaaaaaaaaaaaaaaaaaaaaaaaaaaaaaaaaaaaaaaaaaaaaaaaaaaaaaaaaaaaaaaaaaaaaaaaaaaaaaaaaaaaaaaaaaaaaaaaaaaaaaaaa</div>
<div class="t" style="left:726.00px;top:1086.96px;font-size:25.5px;color:#fff;font-family:'Liberation Mono',monospace;letter-spacing:-1.3px;">aaaaaaaaaaaaaaaaaaaaaaaaaaaaaaaaaaaaaaaaaaaaaaaaaaaaaaaaaaaaaaaaaaaaaaaaaaaaaaaaaaaaaaaaaaaaaaaaaaaaaaaaaaaaaaaaaaaaaaaaaaaaaaaaaaaaaaaaaaaaaaaaaaaaaaaaaaaaaaa</div>
<div class="t" style="left:726.00px;top:1114.96px;font-size:25.5px;color:#fff;font-family:'Liberation Mono',monospace;letter-spacing:-1.3px;">aaaaaaaaaaaaaaaaaaaaaaaaaaaaaaaaaaaaaaaaaaaaaaaaaaaaaaaaaaaaaaaaaaaaaaaaaaaaaaaaaaaaaaaaaaaaaaaaaaaaaaaaaaaaaaaaaaaaaaaaaaaaaaaaaaaaaaaaaaaaaaaaaaaaaaaaaaaaaaa</div>
<div class="t" style="left:726.00px;top:1142.96px;font-size:25.5px;color:#fff;font-family:'Liberation Mono',monospace;letter-spacing:-1.3px;">aaaaaaaaaaaaaaaaaaaaaaaaaaaaaaaaaaaaaaaaaaaaaaaaaaaaaaaaaaaaaaaaaaaaaaaaaaaaaaaaaaaaaaaaaaaaaaaaaaaaaaaaaaaaaaaaaaaaaaaaaaaaaaaaaaaaaaaaaaaaaaaaaaaaaaaaaaaaaaa</div>
<div class="t" style="left:726.00px;top:1170.96px;font-size:25.5px;color:#fff;font-family:'Liberation Mono',monospace;letter-spacing:-1.3px;">aaaaaaaaaaaaaaaaaaaaaaaaaaaaaaaaaaaaaaaaaaaaaaaaaaaaaaaaaaaaaaaaaaaaaaaaaaaaaaaaaaaaaaaaaaaaaaaaaaaaaaaa&quot;</div>
<div class="t" style="left:726.00px;top:1198.96px;font-size:25.5px;color:#fff;font-family:'Liberation Mono',monospace;letter-spacing:-1.3px;">1: &quot;&quot;</div>
<div class="t" style="left:726.00px;top:1226.96px;font-size:25.5px;color:#fff;font-family:'Liberation Mono',monospace;letter-spacing:-1.3px;">2: &quot;&quot;</div>
<div class="t" style="left:726.00px;top:1254.96px;font-size:25.5px;color:#fff;font-family:'Liberation Mono',monospace;letter-spacing:-1.3px;">3: &quot;&quot;</div>
<div class="t" style="left:726.00px;top:1282.96px;font-size:25.5px;color:#fff;font-family:'Liberation Mono',monospace;letter-spacing:-1.3px;">4: &quot;&quot;</div>
<div class="t" style="left:726.00px;top:1310.96px;font-size:25.5px;color:#fff;font-family:'Liberation Mono',monospace;letter-spacing:-1.3px;">5: &quot;&quot;</div>
<div class="t" style="left:726.00px;top:1338.96px;font-size:25.5px;color:#fff;font-family:'Liberation Mono',monospace;letter-spacing:-1.3px;">6: &quot;bbbbbbbbbbbbbbbbbbbbbbbbbbbbbbbbbbbbbbbbbbbbbbbbbbbbbbbbbbbbbbbbbbbbbbbbbbbbbbbbbbbbbbbbbbbbbbbbbbbbbbbbbbbbbbbbbbbbbbbbbbbbbbbbbbbbbbbbbbbbbbbbbbbbbbbbbbb</div>
<div class="t" style="left:726.00px;top:1366.96px;font-size:25.5px;color:#fff;font-family:'Liberation Mono',monospace;letter-spacing:-1.3px;">bbbbbbbbbbbbbbbbbbbbbbbbbbbbbbbbbbbbbbbbbbbbbbbbbbbbbbbbbbbbbbbbbbbbbbbbbbbbbbbbbbbbbbbbbbbbbbbbbbbbbbbbbbbbbbbbbbbbbbbbbbbbbbbbbbbbbbbbbbbbbbbbbbbbbbbbbbbbbbb</div>
<div class="t" style="left:726.00px;top:1394.96px;font-size:25.5px;color:#fff;font-family:'Liberation Mono',monospace;letter-spacing:-1.3px;">bbbbbbbbbbbbbbbbbbbbbbbbbbbbbbbbbbbbbbbbbbbbbbbbbbbbbbbbbbbbbbbbbbbbbbbbbbbbbbbbbbbbbbbbbbbbbbbbbbbbbbbbbbbbbbbbbbbbbbbbbbbbbbbbbbbbbbbbbbbbbbbbbbbbbbbbbbbbbbb</div>
<div class="t" style="left:726.00px;top:1422.96px;font-size:25.5px;color:#fff;font-family:'Liberation Mono',monospace;letter-spacing:-1.3px;">bbbbbbbbbbbbbbbbbbbbbbbbbbbbbbbbbbbbbbbbbbbbbbbbbbbbbbbbbbbbbbbbbbbbbbbbbbbbbbbbbbbbbbbbbbbbbbbbbbbbbbbbbbbbbbbbbbbbbbbbbbbbbbbbbbbbbbbbbbbbbbbbbbbbbbbbbbbbbbb</div>
<div class="t" style="left:726.00px;top:1450.96px;font-size:25.5px;color:#fff;font-family:'Liberation Mono',monospace;letter-spacing:-1.3px;">bbbbbbbbbbbbbbbbbbbbbbbbbbbbbbbbbbbbbbbbbbbbbbbbbbbbbbbbbbbbbbbbbbbbbbbbbbbbbbbbbbbbbbbb&quot;</div>
<div class="t" style="left:726.00px;top:1478.96px;font-size:25.5px;color:#fff;font-family:'Liberation Mono',monospace;letter-spacing:-1.3px;">7: &quot;&quot;</div>
<div class="t" style="left:726.00px;top:1506.96px;font-size:25.5px;color:#fff;font-family:'Liberation Mono',monospace;letter-spacing:-1.3px;">8: &quot;&quot;</div>
<div class="t" style="left:726.00px;top:1534.96px;font-size:25.5px;color:#fff;font-family:'Liberation Mono',monospace;letter-spacing:-1.3px;">9: &quot;&quot;</div>
<div class="t" style="left:726.00px;top:1562.96px;font-size:25.5px;color:#fff;font-family:'Liberation Mono',monospace;letter-spacing:-1.3px;">10: &quot;&quot;</div>
<div class="t" style="left:726.00px;top:1590.96px;font-size:25.5px;color:#fff;font-family:'Liberation Mono',monospace;letter-spacing:-1.3px;">11: &quot;&quot;&#x27;</div>
<div class="t" style="left:726.00px;top:1618.96px;font-size:25.5px;color:#fff;font-family:'Liberation Mono',monospace;letter-spacing:-1.3px;">cloudly@Cloudlys-MacBook-Pro-9 lab02-cceen % </div>
<div class="a" style="left:1356px;top:1617px;width:14px;height:28px;background:#ffffff;"></div>
<svg width="3104" height="1840" style="left:0;top:0" fill="none" stroke="#fff" stroke-width="1.9" ><path d="M137.5,1665 L145.3,1672.8 L137.5,1680.6 M153.8,1660 L146.8,1666 L153.8,1673.3"/></svg>
<svg width="3104" height="1840" style="left:0;top:0" fill="none" stroke="#fff" stroke-width="2" ><circle cx="203.8" cy="1661" r="3.3"/><circle cx="203.8" cy="1679.6" r="3.3"/><circle cx="216.3" cy="1666" r="3.3"/><path d="M203.8,1664.5 V1676.2 M216.3,1669.4 Q216.3,1673 211,1673 H208 Q203.8,1673 203.8,1676"/></svg>
<div class="t" style="left:231.20px;top:1657.84px;font-size:25px;color:#fff;letter-spacing:0.149px;">master*</div>
<svg width="3104" height="1840" style="left:0;top:0" fill="none" stroke="#fff" stroke-width="1.8" ><path d="M357.1,1665 A10,10 0 0 1 375.6,1669.5 M372,1666.8 L375.6,1670.6 L379.2,1666.8 M374.3,1675 A10,10 0 0 1 355.6,1670.8 M352,1673.2 L355.6,1669.4 L359.2,1673.2"/></svg>
<svg width="3104" height="1840" style="left:0;top:0" fill="none" stroke="#fff" stroke-width="2" ><circle cx="425.5" cy="1670" r="11"/><path d="M420,1664.5 L431,1675.5 M431,1664.5 L420,1675.5"/></svg>
<div class="t" style="left:447.90px;top:1657.84px;font-size:25px;color:#fff;">0</div>
<svg width="3104" height="1840" style="left:0;top:0" fill="none" stroke="#fff" stroke-width="2" ><path d="M482.5,1659 L494,1679.5 H471 Z" stroke-linejoin="round"/><path d="M482.5,1666 V1673 M482.5,1675.5 V1677.5"/></svg>
<div class="t" style="left:504.60px;top:1657.84px;font-size:25px;color:#fff;">0</div>
<svg width="3104" height="1840" style="left:0;top:0" fill="none" stroke="#fff" stroke-width="1.7" ><path d="M559.6,1667.6 V1660 L575.7,1670.8 L566.4,1677.3"/><ellipse cx="557" cy="1678" rx="4" ry="5.4"/><path d="M553,1675.2 H561 M550.5,1678.2 H553 M561,1678.2 H563.5 M551,1672.5 L553.3,1674.6 M563,1672.5 L560.7,1674.6 M551,1684 L553.3,1681.8 M563,1684 L560.7,1681.8"/></svg>
<div class="t" style="left:584.00px;top:1657.84px;font-size:25px;color:#fff;letter-spacing:0.47px;">Debug active file (lab02-cceen)</div>
<svg width="3104" height="1840" style="left:0;top:0" fill="none" stroke="#fff" stroke-width="1.8" ><path d="M978.2,1674 C979.5,1667 984,1663 993.2,1663 V1657.8 L1002.6,1665.1 L993.2,1672.4 V1668 C987,1668 982,1670 978.2,1674 Z" stroke-linejoin="round"/><circle cx="987.7" cy="1678" r="4.1"/></svg>
<div class="t" style="left:1009.00px;top:1657.84px;font-size:25px;color:#fff;letter-spacing:-0.046px;">Live Share</div>
<div class="t" style="left:2128.50px;top:1657.84px;font-size:25px;color:#fff;letter-spacing:-0.528px;">Ln 14, Col 1</div>
<div class="t" style="left:2290.90px;top:1657.84px;font-size:25px;color:#fff;letter-spacing:-0.047px;">Spaces: 4</div>
<div class="t" style="left:2435.00px;top:1657.84px;font-size:25px;color:#fff;letter-spacing:0.52px;">UTF-8</div>
<div class="t" style="left:2539.40px;top:1657.84px;font-size:25px;color:#fff;letter-spacing:-1.304px;">LF</div>
<div class="t" style="left:2600.00px;top:1657.84px;font-size:25px;color:#fff;">c</div>
<div class="t" style="left:2644.00px;top:1657.84px;font-size:25px;color:#fff;letter-spacing:0.117px;">kite: ready</div>
<div class="t" style="left:2793.00px;top:1657.84px;font-size:25px;color:#fff;letter-spacing:0.635px;">Mac</div>
<svg width="3104" height="1840" style="left:0;top:0" fill="none" stroke="#fff" stroke-width="1.7" ><circle cx="2884" cy="1668.7" r="4.2"/><path d="M2876.6,1682 Q2876.6,1674.4 2884,1674.4 Q2891.6,1674.4 2891.6,1682"/><path d="M2882.5,1661.8 V1658.6 H2899.4 V1669 H2896.6 L2892.8,1673 V1669 H2891.6"/></svg>
<svg width="3104" height="1840" style="left:0;top:0" fill="none" stroke="#fff" stroke-width="1.7" ><path d="M2938.5,1677.8 H2957.6 L2955.8,1671.6 M2938.5,1677.8 Q2940.6,1673 2940.6,1668 Q2940.6,1659 2948.5,1658.4 M2945.4,1678.6 Q2945.8,1681.8 2948,1681.8 Q2950.2,1681.8 2950.6,1678.6"/></svg>
<div class="a" style="left:2948.1px;top:1655.9px;width:14px;height:14px;border-radius:50%;background:#000"></div>
<div class="a" style="left:2949.95px;top:1657.75px;width:10.3px;height:10.3px;border-radius:50%;background:#fff"></div>
</body></html>
